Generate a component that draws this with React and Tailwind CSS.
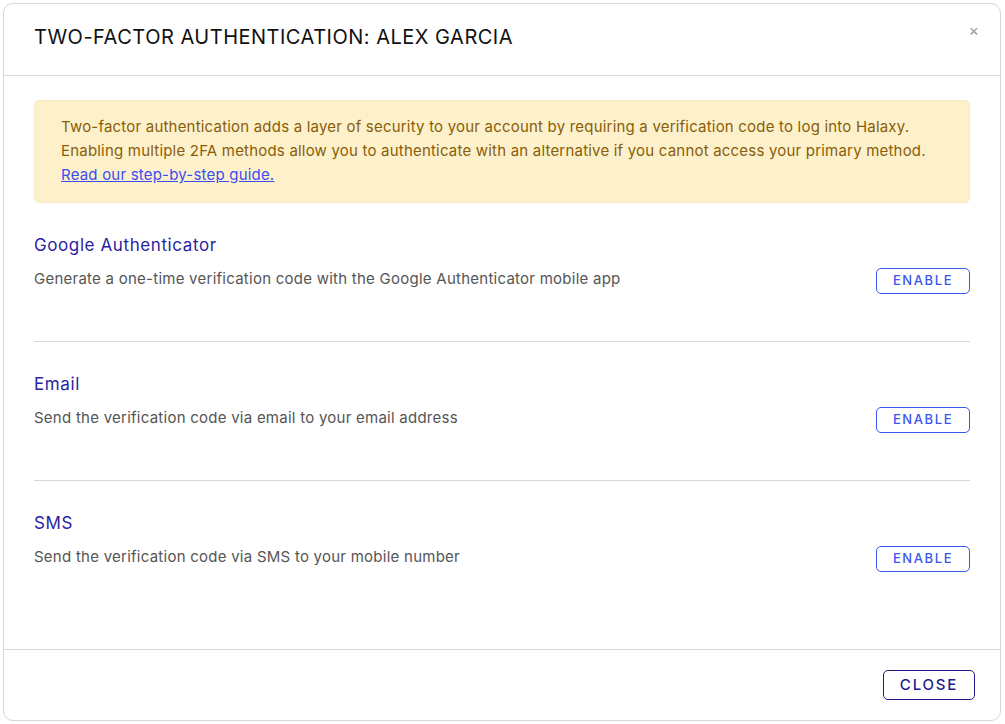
import React from 'react';

const methods = [
    { title: 'Google Authenticator', desc: 'Generate a one-time verification code with the Google Authenticator mobile app' },
    { title: 'Email', desc: 'Send the verification code via email to your email address' },
    { title: 'SMS', desc: 'Send the verification code via SMS to your mobile number' },
];

const App = () => {
    return (
        <div className="w-[1005px] h-[724px] bg-white p-[3px] font-['Inter',sans-serif]">
            <div className="h-[718px] w-[998px] border border-[#d6d6d6] rounded-[10px] flex flex-col">
                {/* Header */}
                <div className="h-[72px] border-b border-[#d6d6d6] flex items-center justify-between pl-[30px] pr-[20px]">
                    <h2 className="text-[20px] text-[#111] tracking-[0.5px] -mt-[5px]">TWO-FACTOR AUTHENTICATION: ALEX GARCIA</h2>
                    <button className="text-[#999] text-[16px] leading-none -mt-[20px] mr-[1px]">×</button>
                </div>

                {/* Body */}
                <div className="flex-1 px-[30px] pt-[24px]">
                    <div className="bg-[#fdf1cb] border border-[#fbeac0] rounded-[5px] px-[26px] pt-[14px] pb-[15px] text-[15px] leading-[24px] text-[#8a5d09] tracking-[0.2px]">
                        <p>Two-factor authentication adds a layer of security to your account by requiring a verification code to log into Halaxy.</p>
                        <p>Enabling multiple 2FA methods allow you to authenticate with an alternative if you cannot access your primary method.</p>
                        <a href="#" className="text-[#3b4cf5] underline">Read our step-by-step guide.</a>
                    </div>

                    {methods.map((m, i) => (
                        <div key={m.title} className={`pt-[31px] pb-[47px] ${i < methods.length - 1 ? 'border-b border-[#d6d6d6]' : ''}`}>
                            <h3 className="text-[17px] leading-[22px] text-[#2a1fa0] tracking-[0.6px]">{m.title}</h3>
                            <div className="flex items-start justify-between mt-[11px] h-[27px]">
                                <p className="text-[15px] leading-[24px] text-[#555] tracking-[0.25px]">{m.desc}</p>
                                <button className="mt-[1px] w-[94px] h-[26px] border border-[#3b55f0] rounded-[5px] text-[#3b55f0] text-[13px] tracking-[1.6px] font-medium">
                                    ENABLE
                                </button>
                            </div>
                        </div>
                    ))}
                </div>

                {/* Footer */}
                <div className="h-[71px] border-t border-[#d6d6d6] flex items-center justify-end pr-[25px]">
                    <button className="w-[92px] h-[30px] border border-[#1e1a8c] rounded-[5px] text-[#1e1a8c] text-[15px] tracking-[1.8px] font-medium">
                        CLOSE
                    </button>
                </div>
            </div>
        </div>
    );
};

export default App;
